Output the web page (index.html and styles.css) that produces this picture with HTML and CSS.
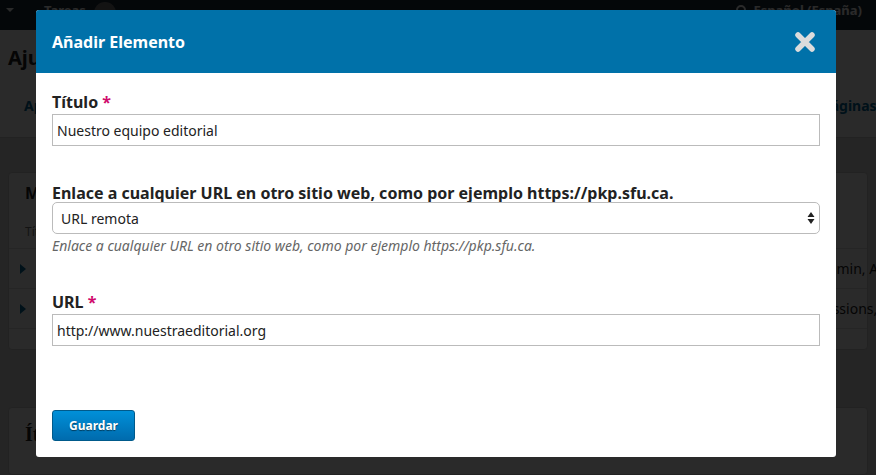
FILE: index.html
```html
<!DOCTYPE html>
<html lang="es">
<head>
<meta charset="utf-8">
<title>Añadir Elemento</title>
<link rel="stylesheet" href="styles.css">
</head>
<body>
<div class="page">
  <header class="topbar">
    <div class="topbar-left">
      <span class="caret"></span>
      <span class="tasks">Tareas</span>
      <span class="badge">0</span>
    </div>
    <div class="topbar-right">
      <span class="user-icon"></span>
      <span>Español (España)</span>
    </div>
  </header>
  <div class="pagehead">
    <h1 class="pagetitle">Ajustes del sitio web</h1>
    <nav class="tabs">
      <span class="tab">Apariencia</span>
      <span class="tab">Configuración</span>
      <span class="tab">Menús de navegación</span>
      <span class="tab">Páginas</span>
    </nav>
  </div>
  <main class="content">
    <section class="panel panel-one">
      <h2 class="panel-title">Menús de navegación</h2>
      <div class="panel-sub">Título</div>
      <div class="row"><span class="tri"></span><span class="row-text">Menú de usuario</span><span class="row-right">Site Admin, Autor</span></div>
      <div class="row"><span class="tri"></span><span class="row-text">Menú primario</span><span class="row-right">Submissions, Acerca de</span></div>
    </section>
    <section class="panel panel-two">
      <h2 class="panel-title serif">Ítems del menú de navegación</h2>
    </section>
  </main>
</div>
<div class="overlay"></div>
<div class="modal">
  <div class="modal-head">
    <h2 class="modal-title">Añadir Elemento</h2>
    <button class="close" aria-label="Cerrar">
      <svg width="22" height="22" viewBox="0 0 22 22"><path d="M4 4 L18 18 M18 4 L4 18" stroke="#dcdcdc" stroke-width="5.5" stroke-linecap="round"/></svg>
    </button>
  </div>
  <form class="modal-body">
    <div class="field">
      <label class="label">Título <span class="req">*</span></label>
      <input class="input" type="text" value="Nuestro equipo editorial">
    </div>
    <div class="field field-select">
      <label class="label">Enlace a cualquier URL en otro sitio web, como por ejemplo https://pkp.sfu.ca.</label>
      <div class="select">
        <span>URL remota</span>
        <svg width="8" height="14" viewBox="0 0 8 14"><path d="M4 1 L7.5 6 L0.5 6 Z M0.5 8 L7.5 8 L4 13 Z" fill="#222"/></svg>
      </div>
      <p class="help">Enlace a cualquier URL en otro sitio web, como por ejemplo https://pkp.sfu.ca.</p>
    </div>
    <div class="field field-url">
      <label class="label">URL <span class="req">*</span></label>
      <input class="input" type="text" value="http://www.nuestraeditorial.org">
    </div>
    <div class="actions">
      <button class="save" type="button">Guardar</button>
    </div>
  </form>
</div>
</body>
</html>
```
FILE: styles.css
```css
* { box-sizing: border-box; }
html, body { margin: 0; padding: 0; }
body {
  width: 876px;
  height: 475px;
  overflow: hidden;
  font-family: "Noto Sans", "Open Sans", sans-serif;
  background: #ddd;
  position: relative;
}
.page { display: flex; flex-direction: column; height: 475px; }
.topbar {
  height: 30px;
  background: #1c2d3a;
  color: #fff;
  display: flex;
  justify-content: space-between;
  align-items: flex-start;
  padding: 0 14px 0 6px;
  font-size: 13px;
  font-weight: 700;
  flex: none;
}
.topbar-left, .topbar-right { display: flex; align-items: center; gap: 8px; height: 18px; margin-top: 1px; }
.caret { width: 0; height: 0; border-left: 4px solid transparent; border-right: 4px solid transparent; border-top: 4px solid #fff; margin-right: 22px; }
.badge { width: 22px; height: 22px; border-radius: 50%; background: #777; font-size: 11px; display: flex; align-items: center; justify-content: center; margin-top: 6px; }
.user-icon { width: 10px; height: 10px; border-radius: 50%; border: 2px solid #fff; }
.pagehead { background: #fff; flex: none; padding: 14px 0 0 8px; height: 108px; border-bottom: 1px solid #ccc; }
.pagetitle { margin: 0; font-size: 20px; font-weight: 700; color: #222; line-height: 28px; white-space: nowrap; }
.tabs { display: grid; grid-template-columns: 266px 266px 266px auto; margin-top: 24px; padding-left: 16px; font-size: 14px; font-weight: 700; color: #006798; white-space: nowrap; }
.content { flex: 1; padding: 34px 8px 0; display: flex; flex-direction: column; gap: 57px; }
.panel { background: #fff; border-radius: 4px; border: 1px solid #ccc; }
.panel-one { padding-bottom: 20px; }
.panel-title { margin: 0; padding: 8px 16px; font-size: 16px; font-weight: 700; color: #222; line-height: 24px; white-space: nowrap; }
.panel-sub { padding: 10px 16px 8px; font-size: 12px; color: #777; border-bottom: 1px solid #ddd; }
.row { display: grid; grid-template-columns: 20px 1fr 76px; align-items: center; height: 40px; padding-left: 11px; border-bottom: 1px solid #ddd; font-size: 14px; color: #222; }
.tri { width: 0; height: 0; border-top: 5px solid transparent; border-bottom: 5px solid transparent; border-left: 6px solid #006798; }
.row-right { white-space: nowrap; }
.panel-two { flex: 1; }
.serif { font-family: "Liberation Serif", serif; font-size: 20px; padding-top: 14px; }
.overlay { position: absolute; inset: 0; background: rgba(0, 0, 0, 0.835); }
.modal {
  position: absolute;
  top: 10px;
  left: 36px;
  width: 800px;
  height: 447px;
  background: #fff;
  border-radius: 3px;
  overflow: hidden;
  display: flex;
  flex-direction: column;
}
.modal-head {
  height: 63px;
  background: #0071a9;
  display: flex;
  align-items: center;
  justify-content: space-between;
  padding: 0 20px 0 16px;
  flex: none;
}
.modal-title { margin: 0; color: #fff; font-size: 16px; font-weight: 700; }
.close { background: none; border: 0; padding: 0; display: flex; cursor: pointer; }
.modal-body { padding: 18px 16px 16px; display: flex; flex-direction: column; flex: 1; }
.field { display: flex; flex-direction: column; }
.label { font-size: 16px; font-weight: 700; color: #222; line-height: 22px; margin-bottom: 1px; }
.req { color: #d00a6c; }
.input {
  height: 32px;
  border: 1px solid #bbb;
  border-radius: 0;
  padding: 0 4px;
  font-family: "Noto Sans", sans-serif;
  font-size: 14px;
  color: #222;
  outline: none;
}
.field-select { margin-top: 38px; }
.field-select .label { line-height: 18px; margin-bottom: 0; }
.select {
  height: 32px;
  border: 1px solid #bbb;
  border-radius: 5px;
  display: flex;
  align-items: center;
  justify-content: space-between;
  padding: 0 4px 0 8px;
  font-size: 14px;
  color: #222;
}
.help { margin: 2px 0 0; font-size: 14px; font-style: italic; color: #666; line-height: 20px; }
.field-url { margin-top: 35px; }
.actions { margin-top: auto; }
.save {
  height: 31px;
  width: 83px;
  border: 1px solid #005a8b;
  border-radius: 3px;
  background: linear-gradient(#0090d9, #006bad);
  color: #fff;
  font-family: "Noto Sans", sans-serif;
  font-weight: 700;
  font-size: 12px;
  text-shadow: 0 1px 1px rgba(0, 0, 0, 0.5);
  cursor: pointer;
}
```
